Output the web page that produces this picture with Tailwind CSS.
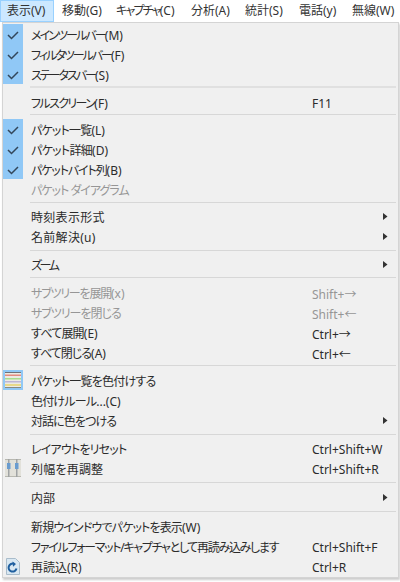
<!DOCTYPE html>
<html><head><meta charset="utf-8"><script src="https://cdn.jsdelivr.net/npm/@tailwindcss/browser@4"></script></head>
<body class="m-0 bg-white">
<div class="w-[400px] h-[582px] overflow-hidden bg-white flex flex-col text-[12px] leading-[22px] text-[#2b2b2b] [font-family:'Noto_Sans','Noto_Sans_CJK_JP',sans-serif] [font-feature-settings:'palt']">
  <div class="h-[22px] flex items-center shrink-0 text-[#333]">
    <div class="h-[22px] w-[54px] pl-[6px] bg-[#cce8ff] border border-[#99d1ff] flex items-center">表示(V)</div>
    <div class="ml-[8px] w-[54px]">移動(G)</div>
    <div class="w-[75px]"><span class="tracking-[-1.8px]">キャプチャ</span>(C)</div>
    <div class="w-[54px]">分析(A)</div>
    <div class="w-[54px]">統計(S)</div>
    <div class="w-[53px]">電話(y)</div>
    <div>無線(W)</div>
  </div>
  <div class="ml-[2px] mr-[1px] h-[556px] bg-[#f0f0f0] border border-[#d4d4d4] shadow-[1px_2px_2px_rgba(0,0,0,0.2)] pt-[1px] flex flex-col leading-[24px]">

    <div class="flex h-[60px] shrink-0">
      <div class="w-[20px] h-[60px] bg-[#90c8f6] flex flex-col shrink-0">
        <svg class="w-[20px] h-[20px]" viewBox="0 0 20 20"><path d="M5 11l3.5 3.5L15 8" fill="none" stroke="#33475a" stroke-width="1.5"/></svg>
        <svg class="w-[20px] h-[20px]" viewBox="0 0 20 20"><path d="M5 11l3.5 3.5L15 8" fill="none" stroke="#33475a" stroke-width="1.5"/></svg>
        <svg class="w-[20px] h-[20px]" viewBox="0 0 20 20"><path d="M5 11l3.5 3.5L15 8" fill="none" stroke="#33475a" stroke-width="1.5"/></svg>
      </div>
      <div class="pl-[8px] flex flex-col">
        <div class="h-[20px]"><span class="tracking-[-1.9px]">メインツールバー</span>(M)</div>
        <div class="h-[20px]"><span class="tracking-[-2px]">フィルタツールバー</span>(F)</div>
        <div class="h-[20px]"><span class="tracking-[-2px]">ステータスバー</span>(S)</div>
      </div>
    </div>
    <div class="h-[8px] pb-[2px] flex items-center pl-[27px] pr-[2px] shrink-0"><div class="h-[2px] w-full bg-[#e0e0e0]"></div></div>
    <div class="h-[20px] flex pl-[28px] shrink-0"><span class="w-[281px]"><span class="tracking-[-1.6px]">フルスクリーン</span>(F)</span><span>F11</span></div>
    <div class="h-[7px] pb-[2px] flex items-center pl-[27px] pr-[2px] shrink-0"><div class="h-[1px] w-full bg-[#d7d7d7]"></div></div>

    <div class="flex h-[80px] shrink-0">
      <div class="w-[20px] h-[60px] bg-[#90c8f6] flex flex-col shrink-0">
        <svg class="w-[20px] h-[20px]" viewBox="0 0 20 20"><path d="M5 11l3.5 3.5L15 8" fill="none" stroke="#33475a" stroke-width="1.5"/></svg>
        <svg class="w-[20px] h-[20px]" viewBox="0 0 20 20"><path d="M5 11l3.5 3.5L15 8" fill="none" stroke="#33475a" stroke-width="1.5"/></svg>
        <svg class="w-[20px] h-[20px]" viewBox="0 0 20 20"><path d="M5 11l3.5 3.5L15 8" fill="none" stroke="#33475a" stroke-width="1.5"/></svg>
      </div>
      <div class="pl-[8px] flex flex-col">
        <div class="h-[20px]"><span class="tracking-[-0.8px]">パケット一覧</span>(L)</div>
        <div class="h-[20px]"><span class="tracking-[-0.7px]">パケット詳細</span>(D)</div>
        <div class="h-[20px]"><span class="tracking-[-1.1px]">パケットバイト列</span>(B)</div>
        <div class="h-[20px] tracking-[-1px] text-[#969696]">パケット ダイアグラム</div>
      </div>
    </div>
    <div class="h-[7px] flex items-center pl-[27px] pr-[2px] shrink-0"><div class="h-[1px] w-full bg-[#d7d7d7]"></div></div>

    <div class="h-[20px] flex justify-between pl-[28px] pr-[10px] shrink-0"><span class="tracking-[0.3px]">時刻表示形式</span><svg class="w-[5px] h-[7px] mt-[7px]" viewBox="0 0 5 7"><path d="M0 0l4.5 3.5L0 7z" fill="#333"/></svg></div>
    <div class="h-[20px] flex justify-between pl-[28px] pr-[10px] shrink-0"><span class="tracking-[0.3px]">名前解決(u)</span><svg class="w-[5px] h-[7px] mt-[7px]" viewBox="0 0 5 7"><path d="M0 0l4.5 3.5L0 7z" fill="#333"/></svg></div>
    <div class="h-[8px] flex items-center pl-[27px] pr-[2px] shrink-0"><div class="h-[1px] w-full bg-[#d7d7d7]"></div></div>
    <div class="h-[20px] flex justify-between pl-[28px] pr-[10px] shrink-0"><span class="tracking-[-2.4px]">ズーム</span><svg class="w-[5px] h-[7px] mt-[7px]" viewBox="0 0 5 7"><path d="M0 0l4.5 3.5L0 7z" fill="#333"/></svg></div>
    <div class="h-[8px] pb-[2px] flex items-center pl-[27px] pr-[2px] shrink-0"><div class="h-[1px] w-full bg-[#d7d7d7]"></div></div>

    <div class="h-[20px] flex pl-[28px] text-[#969696] shrink-0"><span class="w-[281px]"><span class="tracking-[-1.2px]">サブツリーを展開</span>(x)</span><span>Shift+<span class="[font-family:'Noto_Sans_CJK_JP']">→</span></span></div>
    <div class="h-[20px] flex pl-[28px] text-[#969696] shrink-0"><span class="w-[281px] tracking-[-1px]">サブツリーを閉じる</span><span>Shift+<span class="[font-family:'Noto_Sans_CJK_JP']">←</span></span></div>
    <div class="h-[20px] flex pl-[28px] shrink-0"><span class="w-[281px]"><span class="tracking-[-0.8px]">すべて展開</span>(E)</span><span>Ctrl+<span class="[font-family:'Noto_Sans_CJK_JP']">→</span></span></div>
    <div class="h-[20px] flex pl-[28px] shrink-0"><span class="w-[281px]"><span class="tracking-[-1px]">すべて閉じる</span>(A)</span><span>Ctrl+<span class="[font-family:'Noto_Sans_CJK_JP']">←</span></span></div>
    <div class="h-[8px] pb-[2px] flex items-center pl-[27px] pr-[2px] shrink-0"><div class="h-[1px] w-full bg-[#d7d7d7]"></div></div>

    <div class="h-[20px] flex shrink-0">
      <div class="w-[20px] h-[20px] bg-[#90c8f6] flex items-center justify-center shrink-0">
        <svg class="w-[16px] h-[16px]" viewBox="0 0 16 16"><rect width="16" height="16" fill="#ecebe4"/><rect width="16" height="1" fill="#6f7378"/><rect y="2.5" width="16" height="1.5" fill="#e48a80"/><rect y="6" width="16" height="1.5" fill="#a9dc8e"/><rect y="9" width="16" height="1.5" fill="#bdb6d6"/><rect y="12" width="16" height="2" fill="#e8d98a"/><rect y="15" width="16" height="1" fill="#8a8a80"/></svg>
      </div>
      <span class="pl-[8px] tracking-[-0.75px]">パケット一覧を色付けする</span>
    </div>
    <div class="h-[20px] pl-[28px] shrink-0"><span class="tracking-[-0.8px]">色付けルール</span>...(C)</div>
    <div class="h-[20px] flex justify-between pl-[28px] pr-[10px] shrink-0"><span class="tracking-[-0.9px]">対話に色をつける</span><svg class="w-[5px] h-[7px] mt-[7px]" viewBox="0 0 5 7"><path d="M0 0l4.5 3.5L0 7z" fill="#333"/></svg></div>
    <div class="h-[8px] flex items-center pl-[27px] pr-[2px] shrink-0"><div class="h-[1px] w-full bg-[#d7d7d7]"></div></div>

    <div class="h-[20px] flex pl-[28px] shrink-0"><span class="w-[281px] tracking-[-0.8px]">レイアウトをリセット</span><span>Ctrl+Shift+W</span></div>
    <div class="h-[20px] flex shrink-0">
      <div class="w-[20px] h-[20px] flex items-center justify-center shrink-0">
        <svg class="w-[16px] h-[18px]" viewBox="0 0 16 18"><rect width="16" height="18" fill="#e2e1da"/><rect width="16" height="1" fill="#b8b8b0"/><rect y="17" width="16" height="1" fill="#b8b8b0"/><rect x="3" width="1.5" height="18" fill="#a0a3a4"/><rect x="11" width="1.5" height="18" fill="#a0a3a4"/><rect x="2" y="4" width="3.5" height="6" fill="#6a9ccf"/><rect x="10" y="4" width="3.5" height="6" fill="#6a9ccf"/></svg>
      </div>
      <span class="pl-[8px] w-[289px] tracking-[0.2px]">列幅を再調整</span><span>Ctrl+Shift+R</span>
    </div>
    <div class="h-[9px] flex items-center pl-[27px] pr-[2px] shrink-0"><div class="h-[1px] w-full bg-[#d7d7d7]"></div></div>
    <div class="h-[20px] flex justify-between pl-[28px] pr-[10px] shrink-0"><span>内部</span><svg class="w-[5px] h-[7px] mt-[7px]" viewBox="0 0 5 7"><path d="M0 0l4.5 3.5L0 7z" fill="#333"/></svg></div>
    <div class="h-[9px] flex items-center pl-[27px] pr-[2px] shrink-0"><div class="h-[1px] w-full bg-[#d7d7d7]"></div></div>

    <div class="h-[20px] pl-[28px] shrink-0"><span class="tracking-[-0.85px]">新規ウインドウでパケットを表示</span>(W)</div>
    <div class="h-[20px] flex pl-[28px] shrink-0"><span class="w-[281px] whitespace-nowrap tracking-[-1.3px]">ファイルフォーマット/キャプチャとして再読み込みします</span><span>Ctrl+Shift+F</span></div>
    <div class="h-[20px] flex shrink-0">
      <div class="w-[20px] h-[20px] flex items-center justify-center shrink-0">
        <svg class="w-[16px] h-[17px]" viewBox="0 0 16 17"><path d="M1.5 .5h9l4 4v12h-13z" fill="#d9e8f2" stroke="#a9bccb"/><path d="M11.5 10.5a4 4 0 1 1-2.4-4.6" fill="none" stroke="#1f5f9f" stroke-width="2"/><path d="M7.5 3.5l3.5 2.6-3 2.6z" fill="#1f5f9f"/></svg>
      </div>
      <span class="pl-[8px] w-[289px]">再読込(R)</span><span>Ctrl+R</span>
    </div>
  </div>
</div>
</body></html>
